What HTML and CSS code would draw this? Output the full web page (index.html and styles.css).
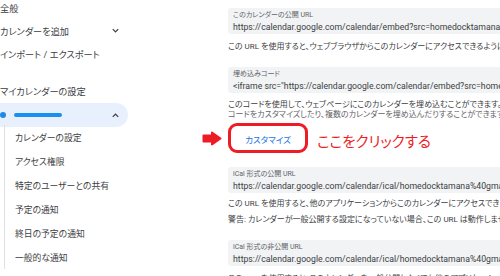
FILE: index.html
```html
<!DOCTYPE html>
<html lang="ja">
<head>
  <meta charset="UTF-8">
  <title>カレンダーの設定</title>
  <link rel="stylesheet" href="styles.css">
</head>
<body>

<div class="page">
  <nav class="sidebar">
    <div class="nav-item">全般</div>
    <div class="nav-item">カレンダーを追加
      <svg class="chevron" viewBox="0 0 10 10"><path d="M2 3.5 L5 6.5 L8 3.5" /></svg>
    </div>
    <div class="nav-item">インポート / エクスポート</div>

    <div class="nav-section">マイカレンダーの設定</div>
    <div class="nav-calendar">
      <span class="dot"></span>
      <span class="hidden-name"></span>
      <svg class="chevron" viewBox="0 0 10 10"><path d="M2 6.5 L5 3.5 L8 6.5" /></svg>
    </div>
    <div class="sub-list">
      <div class="sub-item">カレンダーの設定</div>
      <div class="sub-item">アクセス権限</div>
      <div class="sub-item">特定のユーザーとの共有</div>
      <div class="sub-item">予定の通知</div>
      <div class="sub-item">終日の予定の通知</div>
      <div class="sub-item">一般的な通知</div>
    </div>
  </nav>

  <main class="content">
    <div class="field first">
      <div class="field-label">このカレンダーの公開 URL</div>
      <div class="field-value">https://calendar.google.com/calendar/embed?src=homedocktamana%40gmail.com&amp;ctz=Asia%2FTokyo</div>
    </div>
    <p class="note">この URL を使用すると、ウェブブラウザからこのカレンダーにアクセスできるようになります。</p>

    <div class="field">
      <div class="field-label">埋め込みコード</div>
      <div class="field-value">&lt;iframe src="https://calendar.google.com/calendar/embed?src=homedocktamana%40gmail.com"</div>
    </div>
    <p class="note tight">このコードを使用して、ウェブページにこのカレンダーを埋め込むことができます。</p>
    <p class="note tight muted">コードをカスタマイズしたり、複数のカレンダーを埋め込んだりすることができます。</p>

    <div class="action-row">
      <svg class="pointer" viewBox="0 0 20 15"><path d="M1.5 4.5 H10 V1.5 L18.5 7.5 L10 13.5 V10.5 H1.5 Z" /></svg>
      <div class="highlight">
        <a class="text-button" href="#">カスタマイズ</a>
      </div>
      <span class="callout">ここをクリックする</span>
    </div>

    <div class="field ical">
      <div class="field-label">iCal 形式の公開 URL</div>
      <div class="field-value">https://calendar.google.com/calendar/ical/homedocktamana%40gmail.com/public/basic.ics</div>
    </div>
    <p class="note">この URL を使用すると、他のアプリケーションからこのカレンダーにアクセスできるようになります。</p>
    <p class="note warn">警告: カレンダーが一般公開する設定になっていない場合、この URL は動作しません。</p>

    <div class="field">
      <div class="field-label">iCal 形式の非公開 URL</div>
      <div class="field-value">https://calendar.google.com/calendar/ical/homedocktamana%40gmail.com/private/basic.ics</div>
    </div>
    <p class="note">この URL を使用すると、このカレンダーを一般公開しなくても他のアプリケーションからアクセスできます。</p>
  </main>
</div>

</body>
</html>
```

FILE: styles.css
```css
body {
  margin: 0;
  background-color: #ffffff;
  color: #3c4043;
  font-family: Roboto, "Noto Sans CJK JP", sans-serif;
  font-feature-settings: "palt";
  overflow: hidden;
}
.page {
  display: flex;
  width: 500px;
  height: 276px;
  overflow: hidden;
}
.sidebar {
  flex: 0 0 128px;
  margin-top: -4px;
  font-size: 9.2px;
}
.nav-item,
.nav-section {
  display: flex;
  align-items: center;
  justify-content: space-between;
  height: 23px;
  padding-right: 8px;
  white-space: nowrap;
}
.nav-section {
  margin-top: 14px;
}
.chevron {
  width: 9px;
  height: 9px;
  fill: none;
  stroke: #3c4043;
  stroke-width: 1.4;
}
.nav-calendar {
  display: flex;
  align-items: center;
  height: 24px;
  margin-top: 1px;
  padding-right: 8px;
  background-color: #e8f0fe;
  border-radius: 0 12px 12px 0;
}
.dot {
  width: 6px;
  height: 6px;
  border-radius: 50%;
  background-color: #1e88e5;
}
.hidden-name {
  width: 48px;
  height: 4px;
  margin-left: 8px;
  border-radius: 2px;
  background-color: #1a8ff0;
  filter: blur(0.6px);
}
.nav-calendar .chevron {
  margin-left: auto;
}
.sub-list {
  margin-top: -2px;
  margin-left: 4px;
  border-left: 1px solid #e0e0e0;
  padding-left: 10px;
  font-size: 8.8px;
}
.sub-item {
  display: flex;
  align-items: center;
  height: 24px;
  white-space: nowrap;
}

.content {
  flex: 1;
  min-width: 0;
  margin-left: 100px;
  padding-top: 8px;
  white-space: nowrap;
}
.field {
  margin-top: 14px;
  padding: 2px 5px 1px;
  background-color: #f1f3f4;
  border-radius: 3px 0 0 3px;
}
.field.first {
  margin-top: 0;
}
.field-label {
  height: 11px;
  line-height: 11px;
  font-size: 7px;
  color: #5f6368;
}
.field-value {
  height: 12px;
  line-height: 12px;
  font-size: 8.7px;
  color: #3c4043;
}
.note {
  margin: 7px 0 0;
  height: 12px;
  line-height: 12px;
  font-size: 8px;
  color: #3c4043;
}
.note.tight {
  height: 10px;
  line-height: 10px;
}
.note.muted {
  margin-top: 0;
  color: #5f6368;
}
.note.warn {
  margin-top: 4px;
}
.ical + .note {
  margin-top: 5px;
}

.action-row {
  position: relative;
  display: flex;
  align-items: center;
  margin-top: 3px;
}
.pointer {
  position: absolute;
  left: -26px;
  top: 8px;
  width: 20px;
  height: 15px;
  fill: #ee1c25;
  stroke: #ee1c25;
  stroke-width: 2;
  stroke-linejoin: round;
}
.highlight {
  display: flex;
  align-items: center;
  justify-content: center;
  width: 74px;
  height: 22px;
  padding-top: 2px;
  border: 3.5px solid #ee1c25;
  border-radius: 9px;
}
.text-button {
  font-size: 8.5px;
  color: #1a73e8;
  text-decoration: none;
}
.callout {
  margin-left: 9px;
  padding-top: 4px;
  font-size: 14.5px;
  color: #ee1c25;
}
```
